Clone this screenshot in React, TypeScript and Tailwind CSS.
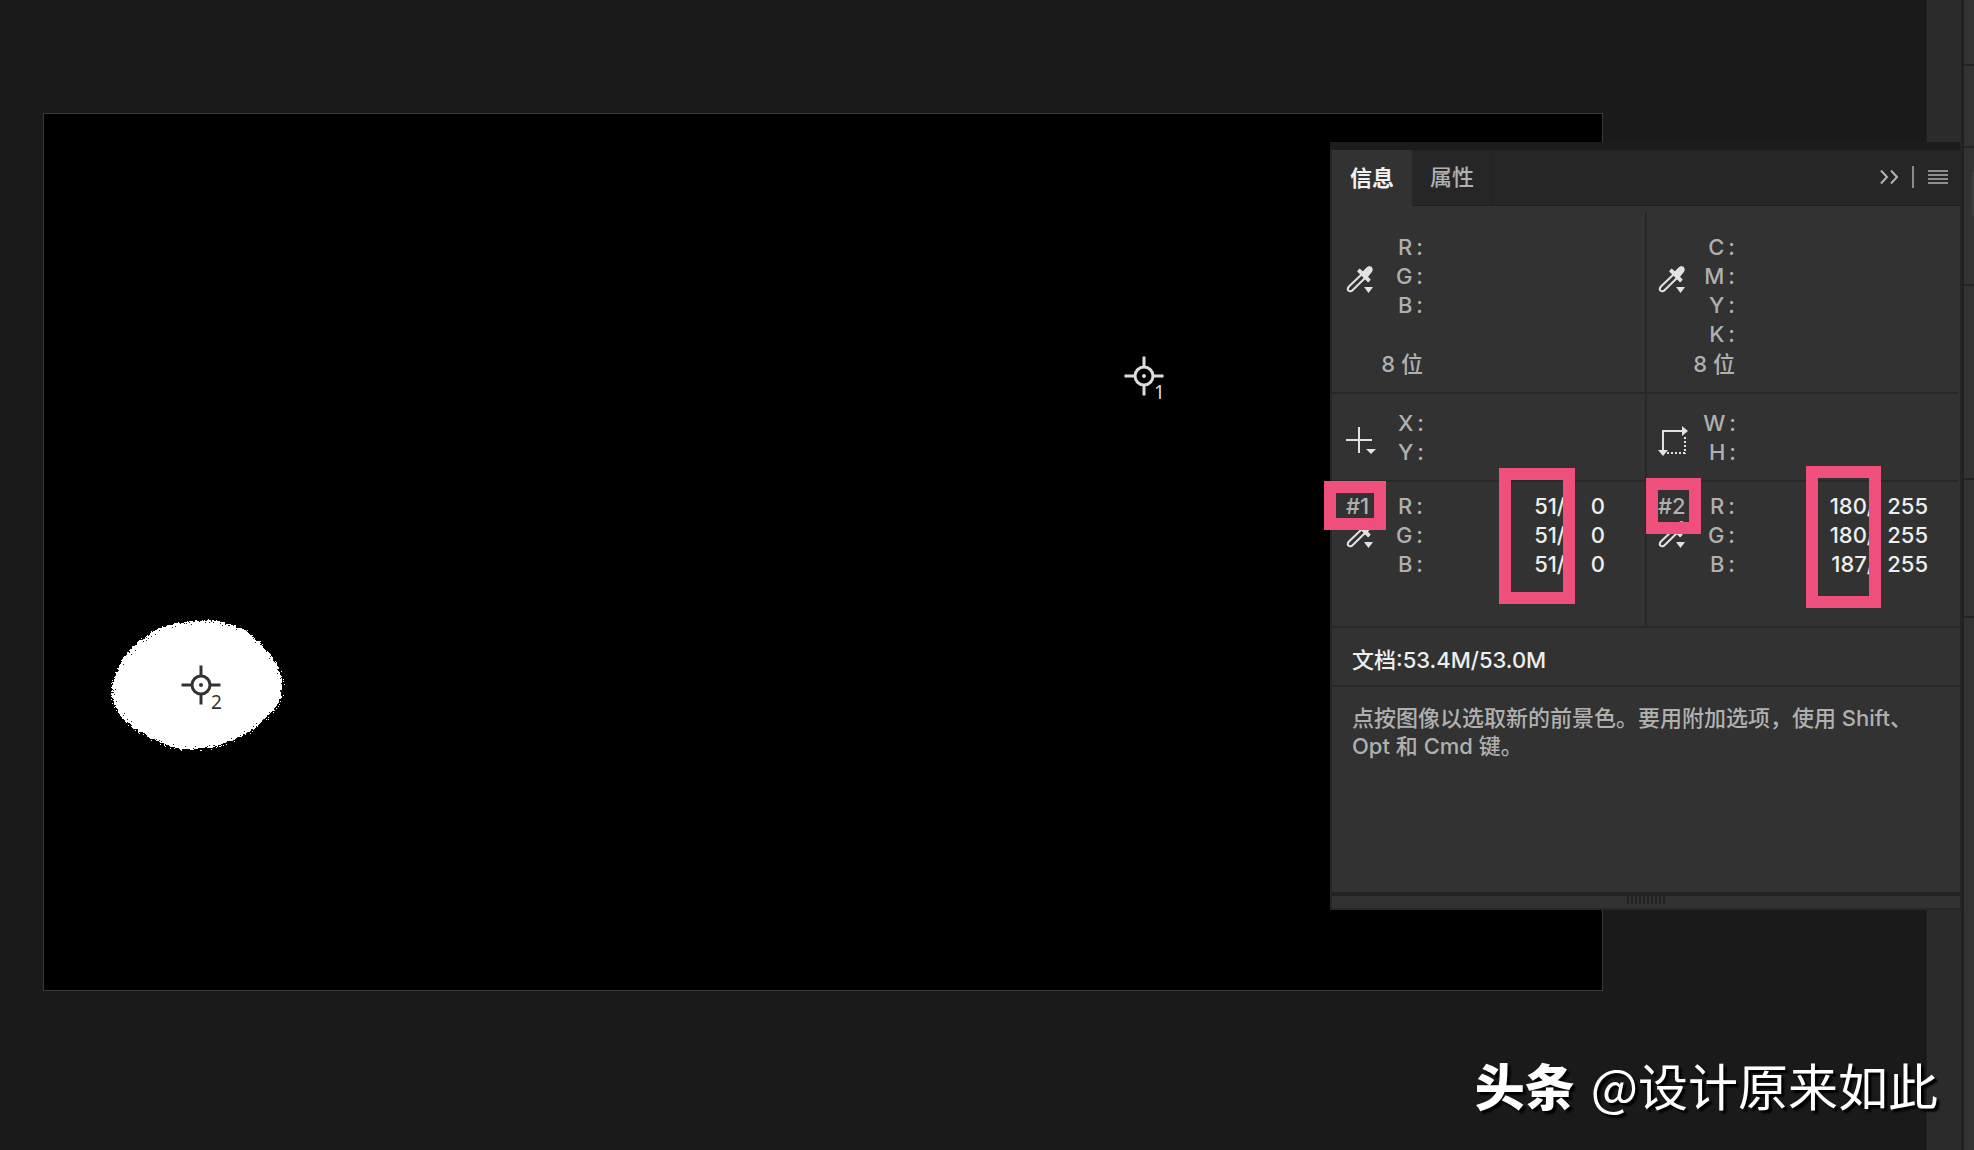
import React from "react";

interface Sampler {
  id: string;
  rows: { channel: string; before: string; after: string }[];
}

const samplers: Sampler[] = [
  {
    id: "#1",
    rows: [
      { channel: "R", before: "51", after: "0" },
      { channel: "G", before: "51", after: "0" },
      { channel: "B", before: "51", after: "0" },
    ],
  },
  {
    id: "#2",
    rows: [
      { channel: "R", before: "180", after: "255" },
      { channel: "G", before: "180", after: "255" },
      { channel: "B", before: "187", after: "255" },
    ],
  },
];

// Outline of the white area, in canvas pixels
const outline: [number, number][] = [
  [0, 70], [7, 47], [21, 27], [41, 12], [62, 4], [86, 1], [108, 2], [129, 9],
  [147, 22], [162, 41], [170, 62], [167, 80], [156, 96], [138, 111], [116, 122],
  [94, 128], [68, 129], [43, 120], [18, 105], [4, 88],
];

// Closed Catmull-Rom curve through the outline, roughened a little
const buildEdge = () => {
  let seed = 7;
  const random = () => {
    seed = (seed * 16807) % 2147483647;
    return seed / 2147483647;
  };
  const n = outline.length;
  const points: string[] = [];
  const specks: { x: number; y: number; white: boolean }[] = [];
  outline.forEach((p1, i) => {
    const p0 = outline[(i + n - 1) % n];
    const p2 = outline[(i + 1) % n];
    const p3 = outline[(i + 2) % n];
    for (let s = 0; s < 16; s++) {
      const t = s / 16;
      const [x, y] = [0, 1].map(
        (k) =>
          0.5 *
          (2 * p1[k] +
            (p2[k] - p0[k]) * t +
            (2 * p0[k] - 5 * p1[k] + 4 * p2[k] - p3[k]) * t * t +
            (3 * p1[k] - p0[k] - 3 * p2[k] + p3[k]) * t * t * t)
      );
      const scale = 1 + (random() - 0.5) * 0.03;
      points.push(`${(86 + (x - 86) * scale).toFixed(1)},${(65 + (y - 65) * scale).toFixed(1)}`);
      if (random() > 0.4) {
        const white = random() > 0.5;
        const d = white ? 1 + random() * 0.025 : 1 - random() * 0.05;
        specks.push({ x: Math.round(86 + (x - 86) * d), y: Math.round(65 + (y - 65) * d), white });
      }
    }
  });
  return { points: points.join(" "), specks };
};

const edge = buildEdge();

const WhiteArea: React.FC = () => (
  <svg className="absolute left-[68px] top-[505px]" width="174" height="132" viewBox="0 -1 174 132" shapeRendering="crispEdges" overflow="visible">
    <polygon points={edge.points} fill="#fff" />
    {edge.specks.map((s, i) => (
      <rect key={i} x={s.x} y={s.y} width="1" height="1" fill={s.white ? "#fff" : "#222"} />
    ))}
  </svg>
);

const Target: React.FC = () => (
  <svg width="40" height="40" viewBox="0 0 40 40" fill="none" stroke="currentColor" strokeWidth="3">
    <circle cx="20" cy="20" r="9" />
    <path d="M20 0.5V11M20 29v10.5M0.5 20H11M29 20h10.5" />
    <circle cx="20" cy="20" r="2" fill="currentColor" stroke="none" />
  </svg>
);

const Dropper: React.FC = () => (
  <svg width="28" height="28" viewBox="0 0 28 28">
    <path
      d="M15.5 8.5L3.2 20.2c-1.600 1.700-1.900 3.200-.8 4.400s2.800 1 4.400-.6L19 12"
      fill="none"
      stroke="#e2e2e2"
      strokeWidth="2"
    />
    <path
      d="M11 5.2L13.6 2.6l3.3 2.6 3.6-3.6c2-2 4.4-1.4 5.4-.3s1.2 3.2-.6 5.4l-3.3 4 2.8 3-2.7 2.8z"
      fill="#e2e2e2"
    />
    <path d="M18 21h9l-4.500 6z" fill="#e2e2e2" />
  </svg>
);

const Cross: React.FC = () => (
  <svg width="30" height="28" viewBox="0 0 30 28">
    <path d="M13 1v26M0 14h26" stroke="#e2e2e2" strokeWidth="2" />
    <path d="M20 23h10l-5 5z" fill="#e2e2e2" />
  </svg>
);

const Bounds: React.FC = () => (
  <svg width="30" height="30" viewBox="0 0 30 30">
    <path d="M5 26V5h20" fill="none" stroke="#e2e2e2" strokeWidth="2" />
    <path d="M24 0l6 5-6 5zM0 24h10l-5 6z" fill="#e2e2e2" />
    <path d="M27 11v17M9 27h18" fill="none" stroke="#e2e2e2" strokeWidth="2" strokeDasharray="2 2" />
  </svg>
);

const Channels: React.FC<{ names: string[] }> = ({ names }) => (
  <ul className="w-[61px]">
    {names.map((name) => (
      <li key={name} className="flex justify-end gap-1">
        <span>{name}</span>
        <span>:</span>
      </li>
    ))}
  </ul>
);

const ColorReadout: React.FC<{ names: string[] }> = ({ names }) => (
  <div className="flex h-[182px] border-b-2 border-[#282828] pl-[14px] pt-[21px]">
    <div className="w-[28px] pt-[33px]">
      <Dropper />
    </div>
    <div className="w-[49px]">
      <div className="-ml-3 h-[117px]">
        <Channels names={names} />
      </div>
      <p className="whitespace-nowrap text-right">8 位</p>
    </div>
  </div>
);

const PositionReadout: React.FC<{ names: string[]; icon: React.ReactNode }> = ({ names, icon }) => (
  <div className="flex h-[88px] border-b-2 border-[#282828] pl-[14px] pt-[15px]">
    <div className="w-[17px] pt-[17px]">{icon}</div>
    <Channels names={names} />
  </div>
);

const SamplerReadout: React.FC<{ sampler: Sampler; afterClass: string }> = ({ sampler, afterClass }) => (
  <div className="flex h-[144px] pl-[14px] pt-[10px]">
    <div className="w-8 shrink-0">
      <p>{sampler.id}</p>
      <Dropper />
    </div>
    <table className="h-fit flex-1 border-collapse" aria-label={sampler.id}>
      <tbody>
        {sampler.rows.map((row) => (
          <tr key={row.channel} className="h-[29px]">
            <th scope="row" className="w-[45px] p-0 font-medium">
              <span className="flex justify-end gap-1">
                <span>{row.channel}</span>
                <span>:</span>
              </span>
            </th>
            <td className="p-0 text-right text-[#eeeeee]">{row.before}/</td>
            <td className={`p-0 text-right text-[#eeeeee] ${afterClass}`}>{row.after}</td>
          </tr>
        ))}
      </tbody>
    </table>
  </div>
);

const InfoPanel: React.FC = () => (
  <section className="absolute right-3 top-[142px] w-[632px] border-x-2 border-[#262626] bg-[#323232] text-[22px] font-medium leading-[29px] text-[#b0b0b0]">
    <div className="-ml-[2px] h-2 bg-[#1c1c1c]" />
    <header className="flex h-14 items-stretch bg-[#262626]">
      <div role="tablist" className="flex">
        <button role="tab" aria-selected="true" className="w-20 bg-[#323232] font-bold text-[#f0f0f0]">
          信息
        </button>
        <button role="tab" aria-selected="false" className="w-[81px] border-b border-r border-[#202020]">
          属性
        </button>
      </div>
      <div className="flex flex-1 items-center justify-end gap-[14px] border-b border-[#202020] pb-[2px] pr-3">
        <button aria-label="折叠">
          <svg width="18" height="14" viewBox="0 0 18 14" fill="none" stroke="#b4b4b4" strokeWidth="2">
            <path d="M1 0.500L7 7l-6 6.500M11 0.500L17 7l-6 6.500" />
          </svg>
        </button>
        <span className="h-[22px] w-[2px] bg-[#8a8a8a]" />
        <button aria-label="菜单">
          <svg width="20" height="14" viewBox="0 0 20 14" stroke="#8e8e8e" strokeWidth="2">
            <path d="M0 1h20M0 5h20M0 9h20M0 13h20" />
          </svg>
        </button>
      </div>
    </header>

    <div className="flex border-b-2 border-[#282828]">
      <div className="mt-[6px] w-[315px] border-r-2 border-[#282828]">
        <ColorReadout names={["R", "G", "B"]} />
        <PositionReadout names={["X", "Y"]} icon={<Cross />} />
        <SamplerReadout sampler={samplers[0]} afterClass="w-[80px] pr-10" />
      </div>
      <div className="mt-[6px] flex-1 pr-[2px]">
        <div className="-ml-[3px]">
          <ColorReadout names={["C", "M", "Y", "K"]} />
          <PositionReadout names={["W", "H"]} icon={<Bounds />} />
          <SamplerReadout sampler={samplers[1]} afterClass="w-[83px] pr-[30px]" />
        </div>
      </div>
    </div>

    <p className="border-b-2 border-[#282828] pb-[10px] pl-5 pt-[18px] text-[#eeeeee]">文档:53.4M/53.0M</p>
    <p className="h-[205px] px-5 pt-[17px] leading-[28px]">
      点按图像以选取新的前景色。要用附加选项，使用 Shift、
      <br />
      Opt 和 Cmd 键。
    </p>
    <footer className="flex h-[18px] justify-center border-b-2 border-t-4 border-[#222222] border-b-[#282828]">
      <svg width="38" height="8" viewBox="0 0 38 8" stroke="#222" strokeWidth="2">
        <path d="M1 0v8M5 0v8M9 0v8M13 0v8M17 0v8M21 0v8M25 0v8M29 0v8M33 0v8M37 0v8" />
      </svg>
    </footer>

    {/* callout frames */}
    <div className="absolute -left-2 top-[339px] h-[49px] w-[62px] border-12 border-[#ee4f7b]" />
    <div className="absolute left-[167px] top-[326px] h-[136px] w-[76px] border-12 border-[#ee4f7b]" />
    <div className="absolute left-[314px] top-[336px] h-[56px] w-[55px] border-12 border-[#ee4f7b]" />
    <div className="absolute left-[474px] top-[324px] h-[142px] w-[75px] border-12 border-[#ee4f7b]" />
  </section>
);

const App: React.FC = () => {
  return (
    <div className="relative flex min-h-screen overflow-hidden bg-[#1a1a1a] font-['Inter','Noto_Sans_CJK_SC',sans-serif]">
      <main className="flex flex-1 pb-[159px] pl-[43px] pr-[323px] pt-[113px]">
        <div className="relative flex-1 border border-[#3a3a3a] bg-black">
          <WhiteArea />
          <div className="absolute left-[1080px] top-[242px] text-[#dcdcdc]">
            <Target />
            <span className="absolute left-[30px] top-[26px] font-['Noto_Sans',sans-serif] text-[19px] leading-[20px]">1</span>
          </div>
          <div className="absolute left-[137px] top-[551px] text-[#333333]">
            <Target />
            <span className="absolute left-[30px] top-[27px] font-['Noto_Sans',sans-serif] text-[19px] leading-[20px]">2</span>
          </div>
        </div>
      </main>

      <div className="w-[35px] border-l border-[#202020] bg-[#2b2b2b]" />
      <aside className="w-[13px] border-l-3 border-[#212121] bg-[#333333]">
        <div className="h-[66px] border-b-2 border-[#242424]" />
        <div className="h-[82px] border-b-2 border-[#242424]" />
        <div className="h-[138px] border-b-2 border-[#242424] pl-2 pt-6">
          <div className="h-[44px] rounded-l bg-[#3e3e3e]" />
        </div>
        <div className="h-[194px] border-b-2 border-[#242424]" />
        <div className="h-[138px] border-b-2 border-[#242424]" />
      </aside>

      <InfoPanel />

      <p className="absolute bottom-[30px] right-[36px] flex items-center gap-4 whitespace-nowrap font-['Noto_Sans_CJK_SC',sans-serif] text-[50px] leading-[72px] text-white [text-shadow:3px_3px_2px_#000]">
        <span className="font-black">头条</span>
        <span>@设计原来如此</span>
      </p>
    </div>
  );
};

export default App;
